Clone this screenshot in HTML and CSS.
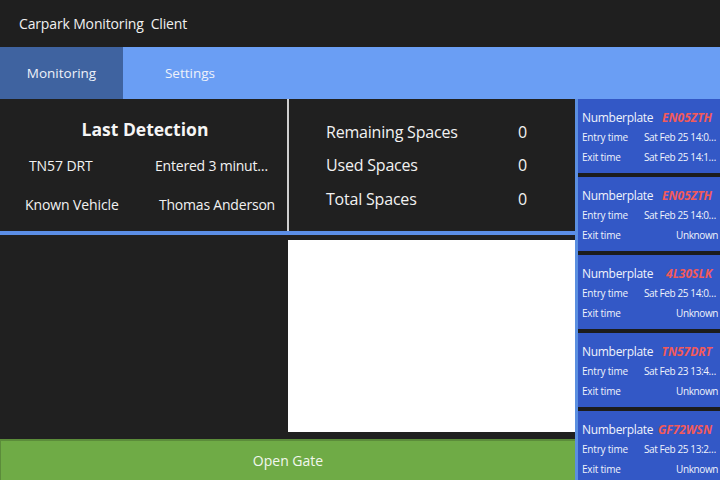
FILE: index.html
```html
<!DOCTYPE html>
<html>
<head>
<meta charset="utf-8">
<link rel="stylesheet" href="styles.css">
</head>
<body>
<div class="app">
  <header class="titlebar">Carpark Monitoring&nbsp; Client</header>
  <nav class="tabs">
    <div class="tab active">Monitoring</div>
    <div class="tab">Settings</div>
  </nav>
  <div class="main">
    <section class="content">
      <div class="top">
        <div class="detection">
          <h1 class="det-title">Last Detection</h1>
          <div class="det-grid">
            <div class="cell c1">TN57 DRT</div>
            <div class="cell c2">Entered 3 minutes ago</div>
            <div class="cell c3">Known Vehicle</div>
            <div class="cell c2">Thomas Anderson</div>
          </div>
        </div>
        <div class="vdiv"></div>
        <div class="stats">
          <div class="stat"><span class="stat-label">Remaining Spaces</span><span class="stat-val">0</span></div>
          <div class="stat"><span class="stat-label">Used Spaces</span><span class="stat-val">0</span></div>
          <div class="stat"><span class="stat-label">Total Spaces</span><span class="stat-val">0</span></div>
        </div>
      </div>
      <div class="hline"></div>
      <div class="bottom">
        <div class="blank"></div>
        <div class="camera"></div>
      </div>
      <button class="gate">Open Gate</button>
    </section>
    <aside class="sidebar">
      <div class="card">
        <div class="row"><span class="lbl big">Numberplate</span><span class="plate">EN05ZTH</span></div>
        <div class="row"><span class="lbl">Entry time</span><span class="val">Sat Feb 25 14:05:12 2023</span></div>
        <div class="row"><span class="lbl">Exit time</span><span class="val">Sat Feb 25 14:12:40 2023</span></div>
      </div>
      <div class="card">
        <div class="row"><span class="lbl big">Numberplate</span><span class="plate">EN05ZTH</span></div>
        <div class="row"><span class="lbl">Entry time</span><span class="val">Sat Feb 25 14:02:31 2023</span></div>
        <div class="row"><span class="lbl">Exit time</span><span class="val">Unknown</span></div>
      </div>
      <div class="card">
        <div class="row"><span class="lbl big">Numberplate</span><span class="plate">4L30SLK</span></div>
        <div class="row"><span class="lbl">Entry time</span><span class="val">Sat Feb 25 14:01:08 2023</span></div>
        <div class="row"><span class="lbl">Exit time</span><span class="val">Unknown</span></div>
      </div>
      <div class="card">
        <div class="row"><span class="lbl big">Numberplate</span><span class="plate">TN57DRT</span></div>
        <div class="row"><span class="lbl">Entry time</span><span class="val">Sat Feb 23 13:48:22 2023</span></div>
        <div class="row"><span class="lbl">Exit time</span><span class="val">Unknown</span></div>
      </div>
      <div class="card">
        <div class="row"><span class="lbl big">Numberplate</span><span class="plate">GF72WSN</span></div>
        <div class="row"><span class="lbl">Entry time</span><span class="val">Sat Feb 25 13:27:55 2023</span></div>
        <div class="row"><span class="lbl">Exit time</span><span class="val">Unknown</span></div>
      </div>
    </aside>
  </div>
</div>
</body>
</html>
```

FILE: styles.css
```css
* { box-sizing: border-box; }
html, body {
  margin: 0;
  padding: 0;
  width: 720px;
  height: 480px;
  overflow: hidden;
  background: #202020;
  font-family: "Open Sans", "Noto Sans", "Liberation Sans", sans-serif;
  color: #f2f2f2;
}
.app {
  display: flex;
  flex-direction: column;
  height: 480px;
}
.titlebar {
  height: 47px;
  flex: none;
  background: #1f1f1f;
  display: flex;
  align-items: center;
  padding-left: 19px;
  font-size: 14px;
  color: #f0f0f0;
  letter-spacing: -0.15px;
}
.tabs {
  height: 52px;
  flex: none;
  background: #6a9ef4;
  display: flex;
}
.tab {
  display: flex;
  align-items: center;
  justify-content: center;
  font-size: 13.5px;
  color: #eef2fa;
  width: 134px;
}
.tab.active {
  width: 123px;
  background: #3f63a0;
}
.main {
  flex: 1;
  display: flex;
  min-height: 0;
}
.content {
  width: 575px;
  flex: none;
  display: flex;
  flex-direction: column;
}
.top {
  height: 132px;
  display: flex;
}
.detection {
  width: 287px;
  padding-top: 18px;
}
.det-title {
  margin: 0;
  font-size: 17.5px;
  font-weight: 700;
  text-align: center;
  line-height: 24px;
  color: #f5f5f5;
  padding-left: 3px;
}
.det-grid {
  display: grid;
  grid-template-columns: 153px 134px;
  grid-auto-rows: 39px;
  margin-top: 5px;
  font-size: 14px;
}
.cell {
  line-height: 39px;
  white-space: nowrap;
  overflow: hidden;
  letter-spacing: -0.1px;
}
.c1 { padding-left: 29px; }
.c3 { padding-left: 25px; }
.c2 {
  text-overflow: ellipsis;
  text-align: right;
  padding: 0 12px 0 2px;
  letter-spacing: -0.2px;
}
.vdiv {
  width: 2px;
  background: #cfcfcf;
}
.stats {
  flex: 1;
  padding: 16px 0 0 37px;
}
.stat {
  display: flex;
  height: 33.5px;
  align-items: center;
  font-size: 16px;
  letter-spacing: -0.2px;
}
.stat-label {
  width: 192px;
}
.hline {
  height: 4px;
  background: #5b8ee6;
  flex: none;
}
.bottom {
  flex: 1;
  display: flex;
  padding: 5px 0 7px;
}
.blank {
  width: 288px;
}
.camera {
  flex: 1;
  background: #ffffff;
}
.gate {
  height: 41px;
  flex: none;
  border: none;
  border-top: 2px solid #5b8c3a;
  border-left: 1px solid #5b8c3a;
  background: #6fab46;
  color: #f2f7ee;
  font-family: inherit;
  font-size: 14px;
  padding: 0;
  margin: 0;
}
.sidebar {
  flex: 1;
  border-left: 3px solid #5b8fe0;
  display: flex;
  flex-direction: column;
  gap: 4px;
  background: #1c1c1c;
  overflow: hidden;
}
.card {
  flex: none;
  height: 74px;
  background: #3358c6;
  padding: 8px 0 0 4px;
}
.row {
  display: flex;
  align-items: center;
  height: 20px;
  white-space: nowrap;
}
.lbl {
  width: 62px;
  flex: none;
  font-size: 10px;
  color: #f0f3fb;
  letter-spacing: -0.2px;
}
.lbl.big {
  width: auto;
  flex: 1;
  font-size: 12px;
  letter-spacing: -0.3px;
}
.plate {
  font-weight: 700;
  font-style: italic;
  color: #f25a5a;
  font-size: 12px;
  padding-right: 8px;
}
.val {
  flex: 1;
  min-width: 0;
  overflow: hidden;
  text-overflow: ellipsis;
  text-align: right;
  font-size: 10px;
  padding-right: 2px;
  color: #f0f3fb;
  letter-spacing: -0.4px;
}
```
